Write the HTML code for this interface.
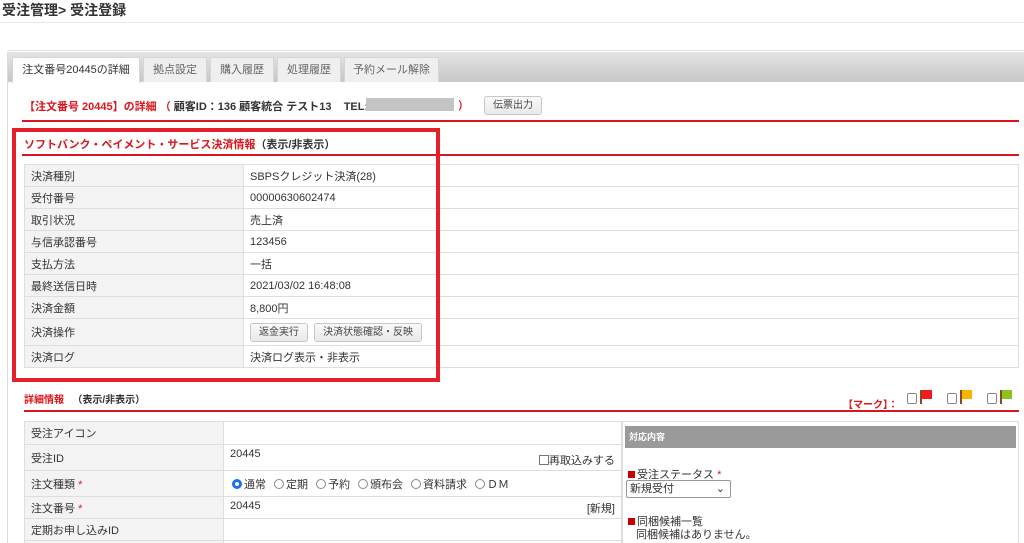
<!DOCTYPE html>
<html style="width:1024px;height:543px;overflow:hidden"><head><meta charset="utf-8"><style>
*{box-sizing:border-box;margin:0;padding:0}
body{width:1024px;height:543px;overflow:hidden;background:#fff;font-family:"Liberation Sans","Noto Sans CJK JP",sans-serif;font-size:11px;color:#333;position:relative}
.abs{position:absolute}
.hdr{left:0;top:0;width:1024px;height:23px;border-bottom:1px solid #e8e8e8;background:#fff}
.hdr span{position:absolute;left:2px;top:0px;font-size:14px;font-weight:bold;color:#333}
.panel{left:7px;top:50px;width:1030px;height:520px;border:1px solid #ddd;border-radius:3px}
.tabbar{left:8px;top:52px;width:1020px;height:30px;background:linear-gradient(#e4e4e4,#c8c8c8);border-bottom:1px solid #ccc}
.tab{position:absolute;top:57px;height:25px;background:#efefef;border:1px solid #d6d6d6;border-bottom:none;font-size:11px;color:#666;text-align:center;line-height:24px}
.tab.on{background:#fff;height:26px;color:#333}
.redline{height:2px;background:#d9161e}
table{border-collapse:collapse;position:absolute}
td{border:1px solid #dedede;padding:0 6px;font-size:11px;color:#333;vertical-align:middle}
td.l{background:#f3f3f3}
.btn{display:inline-block;border:1px solid #c8c8c8;border-radius:3px;background:linear-gradient(#fafafa,#e9e9e9);padding:0 8px;height:19px;line-height:17px;font-size:10px;color:#444;margin-right:6px}
.radio{display:inline-block;width:10px;height:10px;border:1px solid #888;border-radius:50%;vertical-align:-1px;margin:0 2px 0 8px}
.flag{display:block;position:relative;width:26px;height:16px}
.flag i{position:absolute;left:0;top:4px;width:10px;height:11px;border:1px solid #888;border-radius:2px;background:#fff}
.flag b{position:absolute;left:13px;top:1px;width:2px;height:14px;background:#8b4a1e}
.flag u{position:absolute;left:15px;top:1px;width:10px;height:9px}
</style></head><body>
<div class="abs hdr"><span>受注管理&gt; 受注登録</span></div>
<div class="abs panel"></div>
<div class="abs tabbar"></div>
<div class="tab on" style="left:12px;width:128px">注文番号20445の詳細</div>
<div class="tab" style="left:143px;width:64px">拠点設定</div>
<div class="tab" style="left:210px;width:64px">購入履歴</div>
<div class="tab" style="left:277px;width:64px">処理履歴</div>
<div class="tab" style="left:344px;width:95px">予約メール解除</div>

<div class="abs" style="left:24px;top:98px;font-size:11px;font-weight:bold;color:#d9161e">【注文番号 20445】の詳細 <span style="color:#d9161e">（</span> <span style="color:#333">顧客ID：136 顧客統合 テスト13 &nbsp;&nbsp; TEL:</span></div>
<div class="abs" style="left:366px;top:98px;width:88px;height:13px;background:#c4c4c4"></div>
<div class="abs" style="left:458px;top:97px;font-weight:bold;color:#d9161e">）</div>
<div class="abs btn" style="left:484px;top:96px;height:19px;font-size:10px">伝票出力</div>
<div class="abs redline" style="left:22px;top:120px;width:997px"></div>

<div class="abs" style="left:24px;top:136px;font-size:11px;font-weight:bold;color:#d9161e">ソフトバンク・ペイメント・サービス決済情報<span style="color:#333">（表示/非表示）</span></div>
<div class="abs redline" style="left:22px;top:154px;width:997px"></div>

<table style="left:24px;top:164px;width:995px">
<tr style="height:22px"><td class="l" style="width:219px">決済種別</td><td>SBPSクレジット決済(28)</td></tr>
<tr style="height:22px"><td class="l">受付番号</td><td>00000630602474</td></tr>
<tr style="height:22px"><td class="l">取引状況</td><td>売上済</td></tr>
<tr style="height:22px"><td class="l">与信承認番号</td><td>123456</td></tr>
<tr style="height:22px"><td class="l">支払方法</td><td>一括</td></tr>
<tr style="height:22px"><td class="l">最終送信日時</td><td>2021/03/02 16:48:08</td></tr>
<tr style="height:22px"><td class="l">決済金額</td><td>8,800円</td></tr>
<tr style="height:27px"><td class="l">決済操作</td><td><span class="btn">返金実行</span><span class="btn">決済状態確認・反映</span></td></tr>
<tr style="height:22px"><td class="l">決済ログ</td><td>決済ログ表示・非表示</td></tr>
</table>
<div class="abs" style="left:12px;top:128px;width:428px;height:254px;border:4px solid #e5202a"></div>

<div class="abs" style="left:24px;top:391px;font-size:10px;font-weight:bold;color:#d9161e">詳細情報 &nbsp;&nbsp;<span style="color:#333">（表示/非表示）</span></div>
<div class="abs" style="left:843px;top:396px;font-size:10px;font-weight:bold;color:#d9161e">【マーク】：</div>
<div class="abs" style="left:907px;top:389px"><span class="flag"><i></i><b></b><u style="background:#ee1c1c"></u></span></div>
<div class="abs" style="left:947px;top:389px"><span class="flag"><i></i><b></b><u style="background:#f4b400"></u></span></div>
<div class="abs" style="left:987px;top:389px"><span class="flag"><i></i><b></b><u style="background:#8cc21f"></u></span></div>
<div class="abs redline" style="left:24px;top:410px;width:995px"></div>

<table style="left:24px;top:421px;width:598px">
<tr style="height:23px"><td class="l" style="width:199px">受注アイコン</td><td></td></tr>
<tr style="height:26px"><td class="l">受注ID</td><td><span style="position:relative;top:-2px">20445</span><span style="float:right;font-size:11px;position:relative;top:2px"><span style="display:inline-block;width:10px;height:10px;border:1px solid #777;vertical-align:-1px"></span>再取込みする</span></td></tr>
<tr style="height:26px"><td class="l">注文種類 <span style="color:#d9161e">*</span></td><td style="padding-left:0"><span class="radio" style="border:3px solid #1a73e8"></span>通常<span class="radio"></span>定期<span class="radio"></span>予約<span class="radio"></span>頒布会<span class="radio"></span>資料請求<span class="radio"></span>ＤＭ</td></tr>
<tr style="height:22px"><td class="l">注文番号 <span style="color:#d9161e">*</span></td><td>20445<span style="float:right">[新規]</span></td></tr>
<tr style="height:22px"><td class="l">定期お申し込みID</td><td></td></tr>
<tr style="height:22px"><td class="l"></td><td></td></tr>
</table>
<div class="abs" style="left:622px;top:421px;width:397px;height:130px;border:1px solid #dedede"></div>
<div class="abs" style="left:625px;top:426px;width:391px;height:22px;background:#9a9a9a;color:#fff;font-size:9px;font-weight:bold;line-height:22px;padding-left:4px">対応内容</div>
<div class="abs" style="left:628px;top:466px;font-size:11px"><span style="display:inline-block;width:7px;height:7px;background:#c00;margin-right:2px"></span>受注ステータス <span style="color:#d9161e">*</span></div>
<div class="abs" style="left:626px;top:480px;width:105px;height:18px;border:1px solid #999;border-radius:2px;font-size:11px;line-height:16px;padding-left:3px">新規受付<span style="position:absolute;right:5px;top:0">⌄</span></div>
<div class="abs" style="left:628px;top:513px;font-size:11px"><span style="display:inline-block;width:7px;height:7px;background:#c00;margin-right:2px"></span>同梱候補一覧</div>
<div class="abs" style="left:636px;top:526px;font-size:11px">同梱候補はありません。</div>
</body></html>
